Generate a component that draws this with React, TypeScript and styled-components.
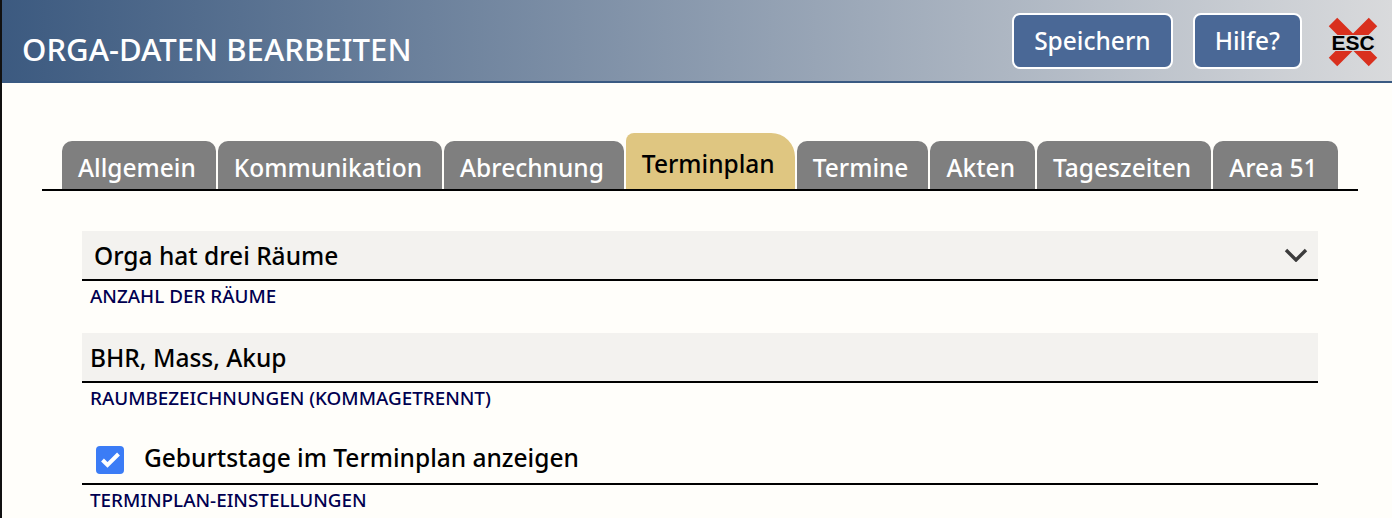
import React from 'react'
import styled, { createGlobalStyle } from 'styled-components'

const GlobalStyle = createGlobalStyle`
  html, body {
    margin: 0;
    padding: 0;
    height: 100%;
    overflow: hidden;
    background: #fffefa;
  }
  body {
    font-family: "Noto Sans", "Open Sans", sans-serif;
  }
`

const Page = styled.div`
  height: 518px;
  border-left: 2px solid #111;
  box-sizing: border-box;
  overflow: hidden;
`

const Header = styled.header`
  height: 81px;
  border-bottom: 2px solid #3a5a82;
  background: linear-gradient(90deg, #3c5a80 0%, #d9dadc 100%);
  display: flex;
  align-items: center;
  padding: 0 12px 0 20px;
`

const Title = styled.h1`
  flex: 1;
  margin: 18px 0 0;
  font-size: 31.1px;
  font-weight: 500;
  color: #fff;
  line-height: 1;
`

const HeaderButton = styled.button`
  height: 56px;
  margin-right: 20px;
  padding: 0 20px;
  border: 2px solid #fff;
  border-radius: 8px;
  background: #4a6896;
  color: #fff;
  font-family: inherit;
  font-size: 24.5px;
  font-weight: 500;
`

const EscIcon = styled.svg`
  width: 52px;
  height: 52px;
  margin-top: 2px;
  margin-left: 5px;
  margin-right: 1px;
`

const Content = styled.main`
  padding: 50px 34px 0 40px;
`

const TabBar = styled.nav`
  display: flex;
  align-items: flex-end;
  gap: 2px;
  height: 56px;
  padding-left: 20px;
  border-bottom: 2px solid #000;
`

const Tab = styled.div<{ $active?: boolean }>`
  display: flex;
  align-items: center;
  justify-content: center;
  box-sizing: border-box;
  height: ${p => (p.$active ? 56 : 48)}px;
  padding: 6px 20px 0 16px;
  border-radius: ${p => (p.$active ? '8px 24px 0 0' : '10px 10px 0 0')};
  background: ${p => (p.$active ? '#dfc681' : '#7f7f7f')};
  color: ${p => (p.$active ? '#000' : '#fff')};
  font-size: 24.5px;
  font-weight: 500;
  line-height: 1;
`

const Form = styled.div`
  margin: 40px 40px 0;
  display: flex;
  flex-direction: column;
  gap: 20px;
`

const Field = styled.div`
  display: flex;
  flex-direction: column;
`

const Control = styled.div<{ $plain?: boolean; $indent?: number }>`
  display: flex;
  align-items: center;
  justify-content: space-between;
  box-sizing: border-box;
  height: 50px;
  padding: 0 10px 0 ${p => p.$indent ?? 8}px;
  border-bottom: 2px solid #000;
  background: ${p => (p.$plain ? 'transparent' : '#f3f2ef')};
  color: #000;
  font-size: 24.5px;
  font-weight: 500;
`

const Caption = styled.label`
  height: 32px;
  padding-left: 8px;
  color: #000050;
  font-size: 18.85px;
  font-weight: 500;
  line-height: 30px;
`

const CheckRow = styled.div`
  display: flex;
  align-items: center;
  gap: 20px;
`

const CheckBox = styled.span`
  display: flex;
  align-items: center;
  justify-content: center;
  width: 28px;
  height: 28px;
  margin-top: 1px;
  border-radius: 4px;
  background: #3b7cf6;
`

const CheckLabel = styled.span`
  margin-bottom: 4px;
`

const tabs = ['Allgemein', 'Kommunikation', 'Abrechnung', 'Terminplan', 'Termine', 'Akten', 'Tageszeiten', 'Area 51']

export default function App() {
  return (
    <>
      <GlobalStyle />
      <Page>
        <Header>
          <Title>ORGA-DATEN BEARBEITEN</Title>
          <HeaderButton>Speichern</HeaderButton>
          <HeaderButton>Hilfe?</HeaderButton>
          <EscIcon viewBox="0 0 52 52">
            <path d="M6 6 L46 46 M46 6 L6 46" stroke="#d9301e" strokeWidth="12" />
            <rect x="3" y="19" width="46" height="16" fill="#d5d6d8" />
            <text x="26" y="34" textAnchor="middle" fontFamily="Liberation Sans" fontWeight="700" fontSize="21" fill="#000">ESC</text>
          </EscIcon>
        </Header>
        <Content>
          <TabBar>
            {tabs.map(t => (
              <Tab key={t} $active={t === 'Terminplan'}>{t}</Tab>
            ))}
          </TabBar>
          <Form>
            <Field>
              <Control $indent={12}>
                Orga hat drei Räume
                <svg width="24" height="14" viewBox="0 0 24 14" fill="none">
                  <path d="M2 2 L12 12 L22 2" stroke="#3c3c3c" strokeWidth="3.4" />
                </svg>
              </Control>
              <Caption>ANZAHL DER RÄUME</Caption>
            </Field>
            <Field>
              <Control>BHR, Mass, Akup</Control>
              <Caption>RAUMBEZEICHNUNGEN (KOMMAGETRENNT)</Caption>
            </Field>
            <Field>
              <Control $plain $indent={14}>
                <CheckRow>
                  <CheckBox>
                    <svg width="28" height="28" viewBox="0 0 28 28" fill="none">
                      <path d="M6.5 14 L11.5 19 L22.5 8" stroke="#fff" strokeWidth="4" />
                    </svg>
                  </CheckBox>
                  <CheckLabel>Geburtstage im Terminplan anzeigen</CheckLabel>
                </CheckRow>
              </Control>
              <Caption>TERMINPLAN-EINSTELLUNGEN</Caption>
            </Field>
          </Form>
        </Content>
      </Page>
    </>
  )
}
